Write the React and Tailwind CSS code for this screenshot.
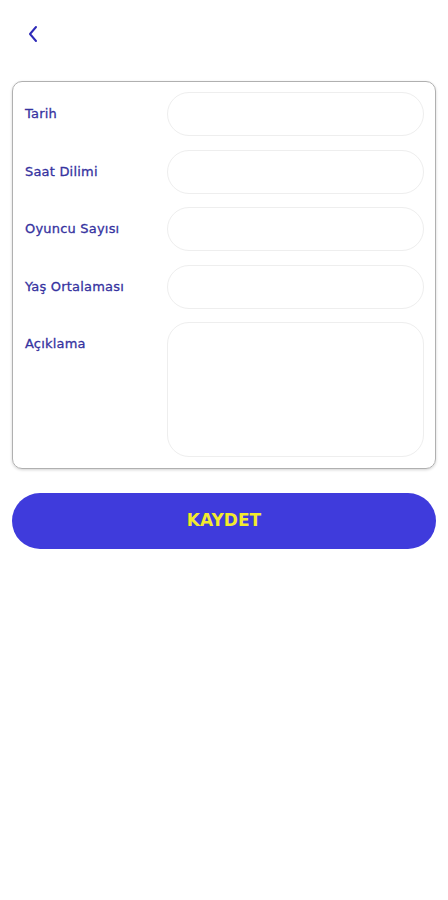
import { useState } from "react";

const fields = [
  { key: "tarih", label: "Tarih" },
  { key: "saat", label: "Saat Dilimi" },
  { key: "oyuncu", label: "Oyuncu Sayısı" },
  { key: "yas", label: "Yaş Ortalaması" },
];

const App = () => {
  const [form, setForm] = useState({});

  const update = (key, value) => setForm({ ...form, [key]: value });

  return (
    <div className="min-h-screen bg-white font-['DejaVu_Sans',sans-serif]">
      {/* header */}
      <div className="h-[68px] px-[26px] pt-[24px]">
        <button className="text-[#2e2ab8]">
          <svg width="16" height="20" viewBox="0 0 16 20" fill="none">
            <path
              d="M10 3 L4 10 L10 17"
              stroke="currentColor"
              strokeWidth="2"
              strokeLinecap="round"
              strokeLinejoin="round"
            />
          </svg>
        </button>
      </div>

      <div className="px-3 pt-[13px]">
        <div className="rounded-[10px] border-[1.5px] border-[#b0b0b0] shadow-[0_1px_3px_rgba(0,0,0,0.18)] px-[11px] pt-[10px] pb-[11px] flex flex-col gap-[13.5px]">
          {fields.map((f) => (
            <div key={f.key} className="flex items-center">
              <label className="w-[143px] pl-px text-[13px] tracking-[0.2px] text-[#36339f] [-webkit-text-stroke:0.3px_#36339f]">
                {f.label}
              </label>
              <input
                value={form[f.key] || ""}
                onChange={(e) => update(f.key, e.target.value)}
                className="flex-1 h-[44px] rounded-[22px] border border-[#eeeeee] px-4 text-sm outline-none"
              />
            </div>
          ))}
          <div className="flex items-start">
            <label className="w-[143px] pl-px pt-[12px] text-[13px] tracking-[0.2px] text-[#36339f] [-webkit-text-stroke:0.3px_#36339f]">
              Açıklama
            </label>
            <textarea
              value={form.aciklama || ""}
              onChange={(e) => update("aciklama", e.target.value)}
              className="flex-1 h-[135px] rounded-[22px] border border-[#eeeeee] px-4 py-3 text-sm outline-none resize-none"
            />
          </div>
        </div>

        <button className="mt-[24px] w-full h-[56px] rounded-full bg-[#3f3bdc] text-[#f2ea2e] text-[17px] font-bold">
          KAYDET
        </button>
      </div>
    </div>
  );
};

export default App;
